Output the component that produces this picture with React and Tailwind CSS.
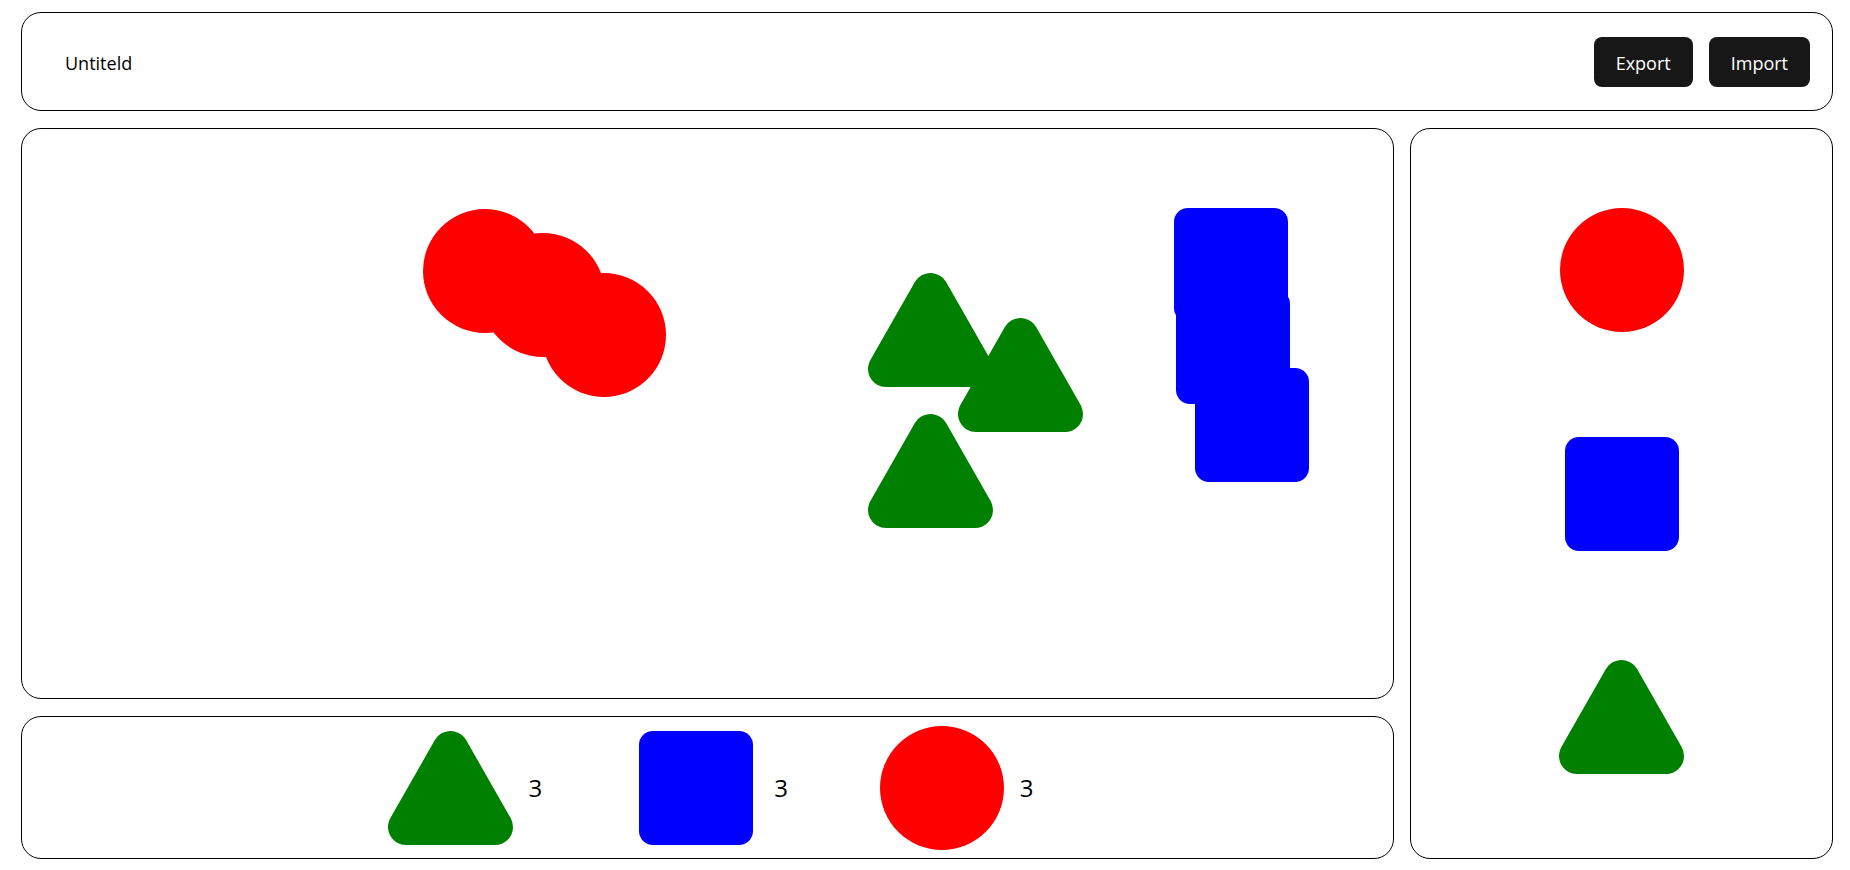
import React from 'react';

const Circle = () => <div className="w-[124px] h-[124px] rounded-full bg-[#ff0000]" />;

const Square = () => <div className="w-[114px] h-[114px] rounded-[14px] bg-[#0000ff]" />;

const Triangle = () => (
  <svg width="125" height="114" viewBox="0 0 125 114" className="block">
    <polygon
      points="62.5,18 18,96 107,96"
      fill="#008000"
      stroke="#008000"
      strokeWidth="36"
      strokeLinejoin="round"
    />
  </svg>
);

const placed = [
  { kind: 'circle', pos: 'left-[401px] top-[80px]' },
  { kind: 'circle', pos: 'left-[459px] top-[104px]' },
  { kind: 'circle', pos: 'left-[520px] top-[144px]' },
  { kind: 'triangle', pos: 'left-[846px] top-[144px]' },
  { kind: 'triangle', pos: 'left-[936px] top-[189px]' },
  { kind: 'triangle', pos: 'left-[846px] top-[285px]' },
  { kind: 'square', pos: 'left-[1152px] top-[79px]' },
  { kind: 'square', pos: 'left-[1154px] top-[161px]' },
  { kind: 'square', pos: 'left-[1173px] top-[239px]' },
];

const Shape = ({ kind }) => {
  if (kind === 'circle') return <Circle />;
  if (kind === 'square') return <Square />;
  return <Triangle />;
};

const counts = [
  { kind: 'triangle', count: 3 },
  { kind: 'square', count: 3 },
  { kind: 'circle', count: 3 },
];

export default function App() {
  return (
    <div className="h-screen flex flex-col gap-[17px] pt-3 pb-[11px] pl-[21px] pr-[17px] bg-white text-black font-['Open_Sans',sans-serif]">
      {/* header */}
      <div className="h-[99px] shrink-0 flex items-center justify-between border border-black rounded-[20px] pl-[43px] pr-[22px]">
        <span className="text-[18px] pt-1">Untiteld</span>
        <div className="flex gap-4">
          <button className="h-[50px] px-[22px] pt-1 rounded-lg bg-[#171717] text-white text-[18px]">Export</button>
          <button className="h-[50px] px-[22px] pt-1 rounded-lg bg-[#171717] text-white text-[18px]">Import</button>
        </div>
      </div>

      <div className="flex-1 min-h-0 flex gap-4">
        <div className="flex-1 flex flex-col gap-[17px]">
          {/* canvas */}
          <div className="flex-1 relative border border-black rounded-[20px]">
            {placed.map((p, i) => (
              <div key={i} className={`absolute ${p.pos}`}>
                <Shape kind={p.kind} />
              </div>
            ))}
          </div>

          {/* tally */}
          <div className="h-[143px] shrink-0 flex items-center justify-center gap-[91px] pl-[6px] border border-black rounded-[20px]">
            {counts.map((c) => (
              <div key={c.kind} className="flex items-center gap-[15px]">
                <div className="w-[126px] h-[126px] flex items-center justify-center">
                  <Shape kind={c.kind} />
                </div>
                <span className="text-[24px]">{c.count}</span>
              </div>
            ))}
          </div>
        </div>

        {/* palette */}
        <div className="w-[423px] shrink-0 flex flex-col py-[29px] border border-black rounded-[20px]">
          <div className="flex-1 flex items-center justify-center"><Circle /></div>
          <div className="flex-1 flex items-center justify-center"><Square /></div>
          <div className="flex-1 flex items-center justify-center"><Triangle /></div>
        </div>
      </div>
    </div>
  );
}
